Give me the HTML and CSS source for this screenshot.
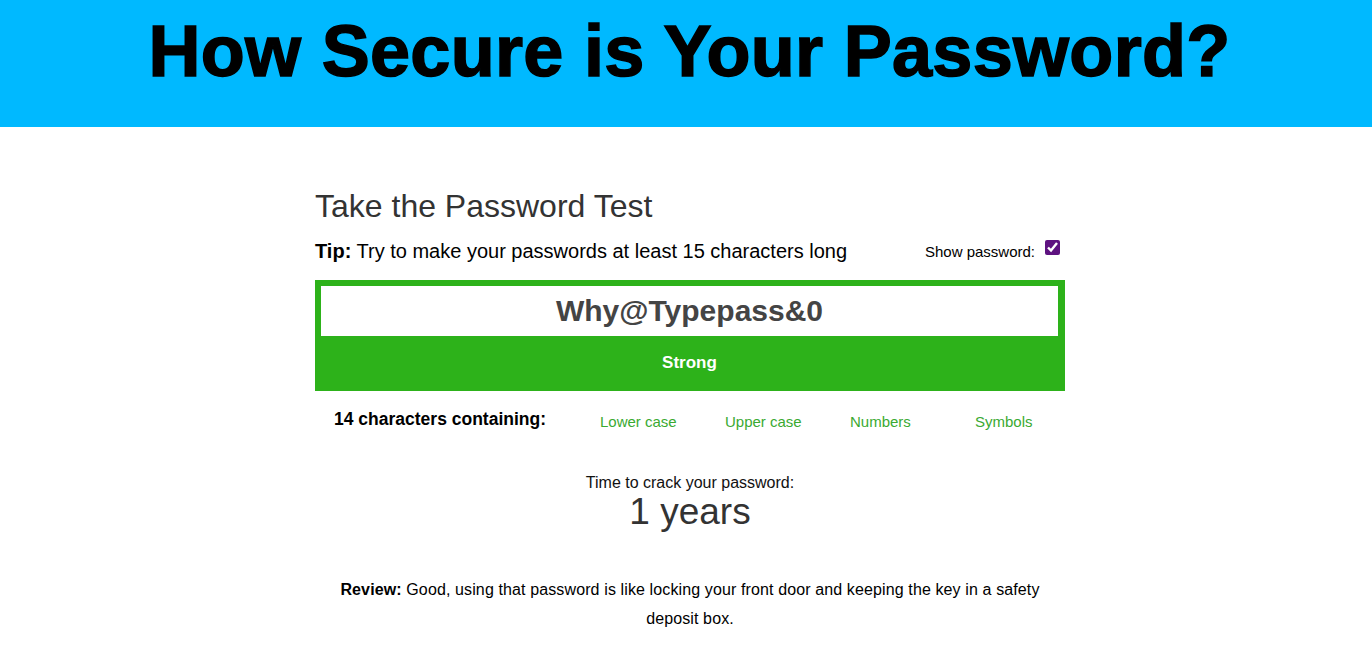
FILE: index.html
```
<!DOCTYPE html>
<html>
<head>
<meta charset="utf-8">
<link rel="stylesheet" href="styles.css">
</head>
<body>
<header class="banner">
  <h1 class="banner-title">How Secure is Your Password?</h1>
</header>
<div class="page">
<main class="tester">
  <h2 class="test-title">Take the Password Test</h2>
  <div class="tip-row">
    <p class="tip"><b>Tip:</b> Try to make your passwords at least 15 characters long</p>
    <label class="show-pw">Show password: <input type="checkbox" checked></label>
  </div>
  <div class="meter">
    <div class="pw-field">Why@Typepass&amp;0</div>
    <div class="strength">Strong</div>
  </div>
  <div class="criteria">
    <span class="count">14 characters containing:</span>
    <span class="crit">Lower case</span>
    <span class="crit">Upper case</span>
    <span class="crit">Numbers</span>
    <span class="crit">Symbols</span>
  </div>
  <div class="crack">
    <div class="crack-label">Time to crack your password:</div>
    <div class="crack-time">1 years</div>
  </div>
  <p class="review"><b>Review:</b> Good, using that password is like locking your front door and keeping the key in a safety deposit box.</p>
</main>
</div>
</body>
</html>
```
FILE: styles.css
```
body {
  margin: 0;
  font-family: "Liberation Sans", Arial, sans-serif;
  background: #fff;
  color: #000;
}
.banner {
  background: #00b9ff;
  height: 127px;
  display: flex;
  justify-content: center;
  box-sizing: border-box;
  padding-top: 9px;
  overflow: hidden;
}
.banner-title {
  margin: 0;
  font-family: "Liberation Sans", Arial, sans-serif;
  font-weight: bold;
  font-size: 72px;
  line-height: 84px;
  letter-spacing: 0.3px;
  -webkit-text-stroke: 1.5px #000;
  color: #000;
  white-space: nowrap;
  padding-left: 7px;
}
.page {
  padding-left: 8px;
}
.tester {
  width: 750px;
  margin: 0 auto;
  padding-top: 59px;
}
.test-title {
  margin: 0;
  font-weight: normal;
  font-size: 32px;
  line-height: 40px;
  color: #333;
}
.tip-row {
  display: flex;
  justify-content: space-between;
  align-items: flex-start;
  height: 54px;
}
.tip {
  margin: 0;
  font-size: 20px;
  line-height: 22px;
  padding-top: 14px;
}
.show-pw {
  font-size: 15px;
  display: flex;
  align-items: center;
  padding-top: 17px;
  padding-right: 5px;
}
.show-pw input {
  margin: 0 0 0 10px;
  width: 15px;
  height: 15px;
  accent-color: #5e1280;
  position: relative;
  top: -4px;
}
.meter {
  background: #2db21a;
  padding: 6px 7px 0 6px;
  height: 105px;
}
.pw-field {
  background: #fff;
  height: 50px;
  text-align: center;
  font-size: 30px;
  font-weight: bold;
  line-height: 50px;
  color: #444;
}
.strength {
  color: #fff;
  font-weight: bold;
  font-size: 17px;
  text-align: center;
  line-height: 54px;
}
.criteria {
  display: grid;
  grid-template-columns: 266px repeat(3, 125px) auto;
  align-items: baseline;
  padding: 18px 0 0 19px;
  height: 41px;
}
.count {
  font-weight: bold;
  font-size: 17.5px;
}
.crit {
  color: #3aaa32;
  font-size: 15px;
  position: relative;
  top: 2px;
}
.crack {
  text-align: center;
  margin-top: 24px;
  color: #111;
}
.crack-label {
  font-size: 16px;
  line-height: 18px;
}
.crack-time {
  font-size: 37px;
  line-height: 40px;
  color: #333;
}
.review {
  text-align: center;
  font-size: 16px;
  line-height: 29px;
  letter-spacing: 0.12px;
  margin: 43px 18px 0;
}
```
